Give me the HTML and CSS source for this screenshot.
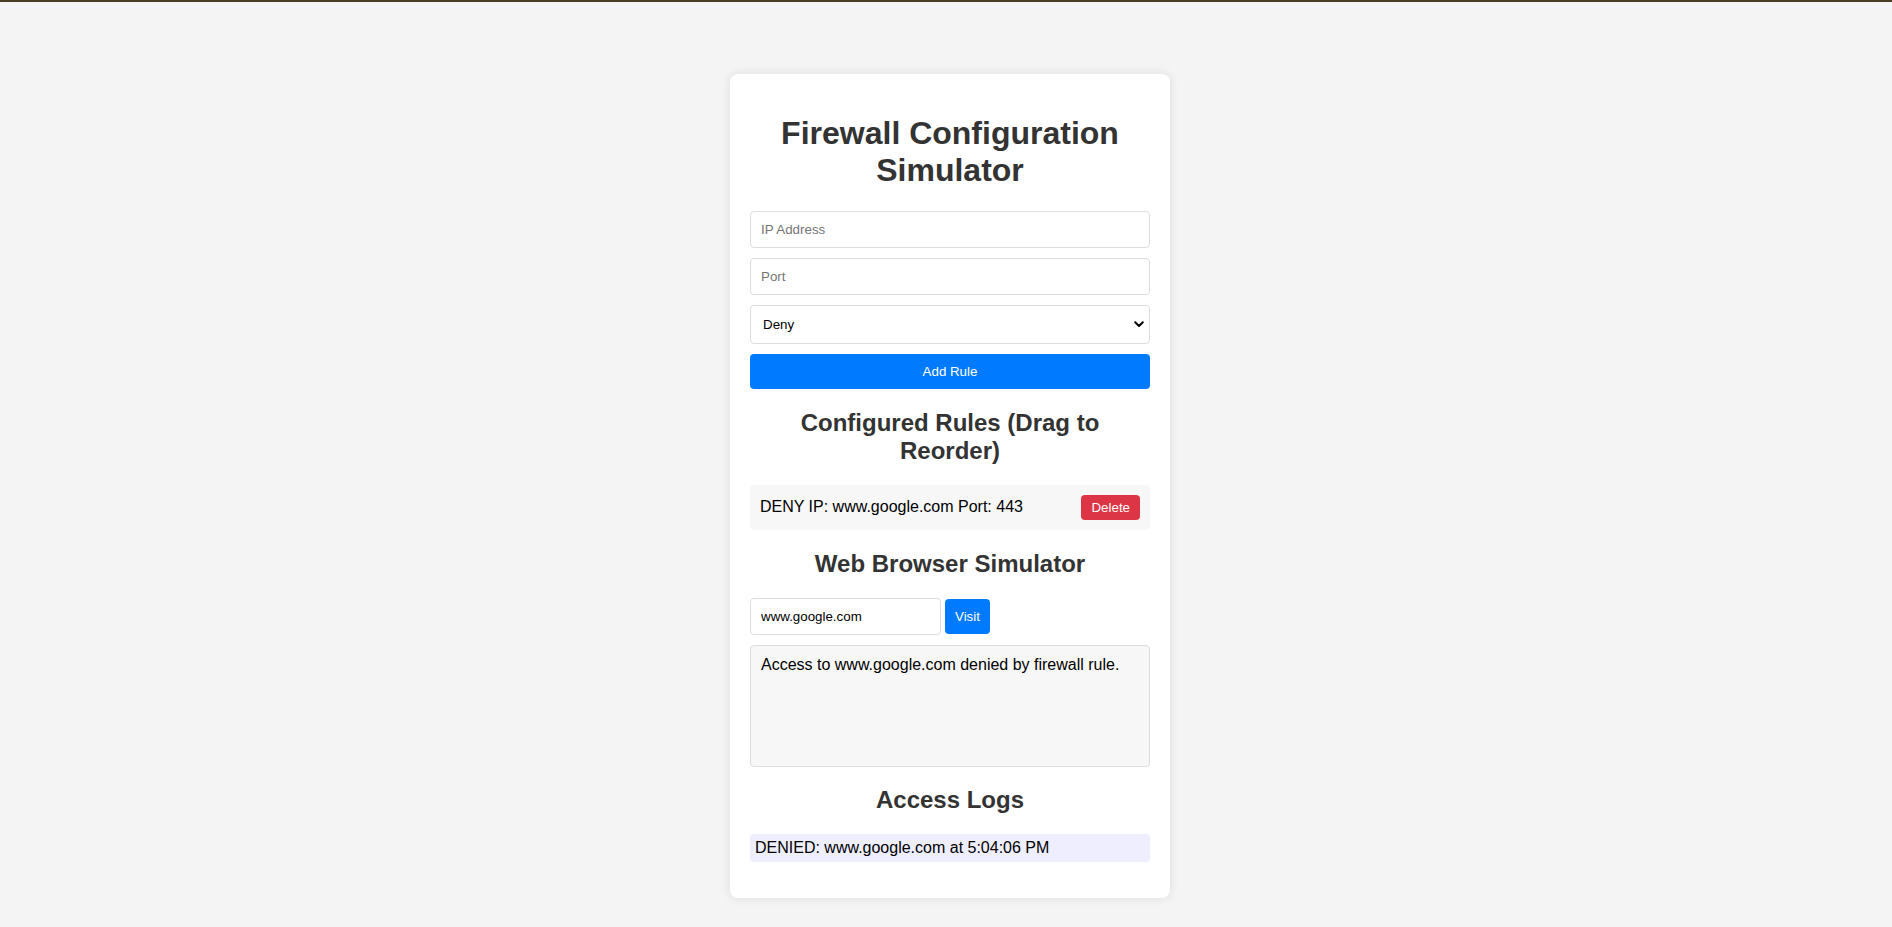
FILE: index.html
```html
<!DOCTYPE html>
<html lang="en">
<head>
<meta charset="utf-8">
<title>Firewall Configuration Simulator</title>
<link rel="stylesheet" href="styles.css">
</head>
<body>
<div class="topbar"></div>
<main class="page">
  <section class="card">
    <h1 class="title">Firewall Configuration Simulator</h1>
    <div class="form">
      <input class="field" type="text" placeholder="IP Address">
      <input class="field" type="text" placeholder="Port">
      <div class="select-wrap">
        <select class="field select">
          <option>Deny</option>
          <option>Allow</option>
        </select>
        <svg class="chevron" width="10" height="7" viewBox="0 0 10 7" aria-hidden="true">
          <path d="M1.2 1.3 L5 5 L8.8 1.3" fill="none" stroke="#000" stroke-width="2" stroke-linecap="round" stroke-linejoin="round"/>
        </svg>
      </div>
      <button class="btn btn-primary btn-block">Add Rule</button>
    </div>

    <h2 class="section-title">Configured Rules (Drag to Reorder)</h2>
    <ul class="rules">
      <li class="rule">
        <span class="rule-text">DENY IP: www.google.com Port: 443</span>
        <button class="btn btn-danger">Delete</button>
      </li>
    </ul>

    <h2 class="section-title">Web Browser Simulator</h2>
    <div class="browser-bar">
      <input class="field url" type="text" value="www.google.com">
      <button class="btn btn-primary">Visit</button>
    </div>
    <div class="result">Access to www.google.com denied by firewall rule.</div>

    <h2 class="section-title">Access Logs</h2>
    <div class="logs">
      <div class="log">DENIED: www.google.com at 5:04:06 PM</div>
    </div>
  </section>
</main>
</body>
</html>
```
FILE: styles.css
```css
html, body {
  margin: 0;
  padding: 0;
}
body {
  background: #f4f4f4;
  font-family: "Liberation Sans", Arial, sans-serif;
  color: #000;
  min-height: 927px;
}
.topbar {
  height: 2px;
  background: #4a3c26;
}
.page {
  display: flex;
  justify-content: center;
  padding: 72px 0 0 8px;
}
.card {
  width: 440px;
  box-sizing: border-box;
  background: #fff;
  border-radius: 8px;
  padding: 20px;
  box-shadow: 0 0 10px rgba(0, 0, 0, 0.1);
  display: flow-root;
}
.title {
  font-size: 32px;
  font-weight: bold;
  color: #333;
  text-align: center;
  margin: 21.44px 0;
}
.section-title {
  font-size: 24px;
  font-weight: bold;
  color: #333;
  text-align: center;
  margin: 19.92px 0;
}
.form {
  display: flex;
  flex-direction: column;
  gap: 10px;
}
.field {
  box-sizing: border-box;
  width: 100%;
  padding: 10px;
  border: 1px solid #ddd;
  border-radius: 4px;
  font-family: "Liberation Sans", Arial, sans-serif;
  font-size: 13.333px;
  line-height: normal;
  height: 37px;
  color: #000;
  background: #fff;
  margin: 0;
}
.field::placeholder {
  color: #757575;
}
.select-wrap {
  position: relative;
}
.select {
  height: 39px;
  padding: 10px 24px 10px 12px;
  appearance: none;
  -webkit-appearance: none;
  display: block;
}
.chevron {
  position: absolute;
  right: 6px;
  top: 16px;
  pointer-events: none;
}
.btn {
  border: none;
  border-radius: 4px;
  color: #fff;
  font-family: "Liberation Sans", Arial, sans-serif;
  font-size: 13.333px;
  line-height: 15px;
  padding: 10px;
  cursor: pointer;
}
.btn-block {
  width: 100%;
  height: 35px;
}
.btn-primary {
  background: #007bff;
}
.btn-danger {
  background: #dc3545;
  padding: 5px 10px;
}
.rules {
  list-style: none;
  margin: 0;
  padding: 0;
}
.rule {
  display: flex;
  justify-content: space-between;
  align-items: center;
  background: #f7f7f7;
  border-radius: 4px;
  padding: 10px;
  font-size: 16px;
  line-height: 18px;
}
.browser-bar {
  display: flex;
  align-items: center;
  gap: 4px;
}
.url {
  width: 191px;
  height: 37px;
}
.browser-bar .btn {
  height: 35px;
}
.result {
  margin-top: 10px;
  height: 122px;
  box-sizing: border-box;
  border: 1px solid #ddd;
  border-radius: 4px;
  background: #f7f7f7;
  padding: 10px;
  font-size: 16px;
}
.logs {
  margin-bottom: 16px;
}
.log {
  background: #eeeeff;
  border-radius: 4px;
  padding: 5px;
  font-size: 16px;
}
```
